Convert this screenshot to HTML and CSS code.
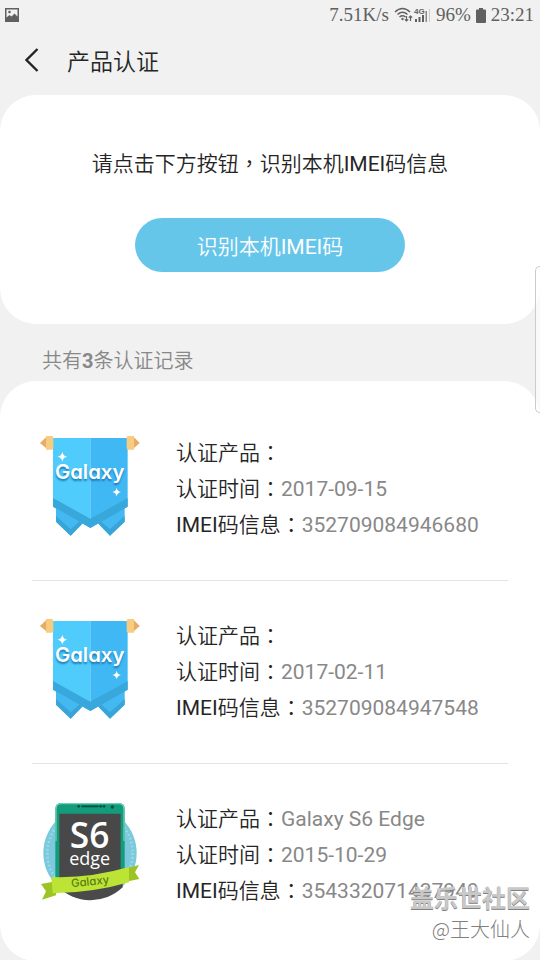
FILE: index.html
```html
<!DOCTYPE html>
<html lang="zh-CN">

<head>
  <meta charset="UTF-8">
  <meta name="viewport" content="width=device-width, initial-scale=1.0">
  <title>产品认证</title>
  <link rel="stylesheet" href="styles.css">
</head>

<body>
  <div class="statusbar">
    <svg class="icon-photo" width="14" height="14" viewBox="0 0 14 14">
      <path d="M0 0h14v14H0z M1.5 1.5v8l3-2.5 2 1.5 3-3 3 3v-7z" fill="#606060" fill-rule="evenodd"/>
      <circle cx="4.500" cy="4" r="1.300" fill="#606060"/>
    </svg>
    <div class="status-right">
      <span>7.51K/s</span>
      <svg width="37" height="16" viewBox="0 0 37 16">
        <g fill="none" stroke="#606060" stroke-width="1.500">
          <path d="M1 5q7.500-7 15 0M3.500 7.500q5-4.500 10 0M5.500 10q3-2.500 6 0"/>
          <path d="M12.500 9v5M10.800 12.300l1.700 1.700 1.700-1.700M16.500 14V9M14.800 10.700l1.700-1.700 1.700 1.700" stroke-width="1.200"/>
        </g>
        <circle cx="8.500" cy="12" r="1.200" fill="#606060"/>
        <text class="net" x="20" y="7">4G</text>
        <path d="M21 12h2v3h-2zM24.500 10h2v5h-2zM28 8h2v7h-2z" fill="#606060"/>
        <path d="M31.500 4H33v11h-1.500z" fill="#888"/>
        <path d="M35 2h1v13h-1z" fill="#ccc"/>
      </svg>
      <span>96%</span>
      <svg width="10" height="15" viewBox="0 0 10 15">
        <path d="M3 0h4v1.500h2q1 0 1 1V14q0 1-1 1H1q-1 0-1-1V2.500q0-1 1-1h2z" fill="#606060"/>
      </svg>
      <span>23:21</span>
    </div>
  </div>

  <header class="header">
    <button class="back" aria-label="返回">
      <svg width="14" height="24" viewBox="0 0 14 24">
        <path d="M12.500 1L1.500 12l11 11" fill="none" stroke="#252525" stroke-width="2.400"/>
      </svg>
    </button>
    <h1>产品认证</h1>
  </header>

  <section class="card identify">
    <p>请点击下方按钮<span lang="zh-TW">，</span>识别本机IMEI码信息</p>
    <button class="btn">识别本机IMEI码</button>
  </section>

  <h2 class="count">共有<b>3</b>条认证记录</h2>

  <ul class="card records">
    <li class="record">
      <svg class="badge" viewBox="30 45 300 312">
        <use href="#flag"/>
      </svg>
      <dl>
        <div><dt>认证产品<span lang="zh-TW">：</span></dt><dd></dd></div>
        <div><dt>认证时间<span lang="zh-TW">：</span></dt><dd>2017-09-15</dd></div>
        <div><dt>IMEI码信息<span lang="zh-TW">：</span></dt><dd>352709084946680</dd></div>
      </dl>
    </li>
    <li class="record">
      <svg class="badge" viewBox="30 45 300 312">
        <use href="#flag"/>
      </svg>
      <dl>
        <div><dt>认证产品<span lang="zh-TW">：</span></dt><dd></dd></div>
        <div><dt>认证时间<span lang="zh-TW">：</span></dt><dd>2017-02-11</dd></div>
        <div><dt>IMEI码信息<span lang="zh-TW">：</span></dt><dd>352709084947548</dd></div>
      </dl>
    </li>
    <li class="record">
      <svg class="badge" viewBox="30 30 300 312">
        <circle cx="180" cy="186" r="140" fill="#7cc8dc"/>
        <circle cx="180" cy="186" r="128" fill="none" stroke="#98d8e8" stroke-width="8" stroke-dasharray="6 6"/>
        <path d="M82 240h196v49A140 140 0 0 1 82 286z" fill="#4a4a4a"/>
        <path d="M76 270V54q0-18 18-18h172q18 0 18 18v216z" fill="#129c7c"/>
        <path d="M78 150V54q0-16 16-16h172q16 0 16 16v96" fill="none" stroke="#6cd0b4" stroke-width="4"/>
        <path d="M88 68h184v200H88z" fill="#484848"/>
        <path d="M156 46h48" stroke="#0a4c40" stroke-width="5" stroke-linecap="round"/>
        <g fill="#0a4c40">
          <circle cx="146" cy="46" r="4"/>
          <circle cx="212" cy="46" r="4"/>
          <circle cx="222" cy="46" r="4"/>
          <circle cx="247" cy="48" r="5"/>
        </g>
        <text class="s6" x="179" y="172">S6</text>
        <text class="edge" x="179" y="222">edge</text>
        <path d="M33 279l45-8v42l-42 13 12-25zM280 235l47-13-12 22 13 20-48 10z" fill="#9cc424"/>
        <path d="M64 258q116 4 233-30v46q-110 32-229 33z" fill="#bce434"/>
        <text class="ribbon" x="180" y="283" transform="rotate(-6 180 270)">Galaxy</text>
      </svg>
      <dl>
        <div><dt>认证产品<span lang="zh-TW">：</span></dt><dd>Galaxy S6 Edge</dd></div>
        <div><dt>认证时间<span lang="zh-TW">：</span></dt><dd>2015-10-29</dd></div>
        <div><dt>IMEI码信息<span lang="zh-TW">：</span></dt><dd>354332071437949</dd></div>
      </dl>
    </li>
  </ul>

  <div class="edge-handle"></div>

  <div class="watermark">
    <strong>盖乐世社区</strong>
    <span>@王大仙人</span>
  </div>

  <!-- shared Galaxy flag badge -->
  <svg class="defs" width="0" height="0">
    <defs>
      <g id="flag">
        <path d="M78 240h80v70l-36 37-44-42zM204 310v-70h80v65l-44 42z" fill="#44b8f0"/>
        <path d="M78 288l44 40 36-32v14l-36 37-44-42zM204 296l36 32 44-40v17l-44 42-36-37z" fill="#38a4d8"/>
        <path d="M69 54h112v270l-112-64z" fill="#50ccfc"/>
        <path d="M181 54h112v206l-112 64z" fill="#40b8f4"/>
        <path d="M69 234l112 62 112-62v26l-112 64-112-64z" fill="#38a8dc"/>
        <path d="M48 48h17q5 0 5 5v31q0 5-5 5H48V78l-18-9 18-10zM312 48h-17q-5 0-5 5v31q0 5 5 5h17V78l17-9-17-10z" fill="#f8cc80"/>
        <path d="M48 52v32l-18-15zM312 52v32l17-15z" fill="#e8ac64"/>
        <path d="M97 95q2 13 15 15-13 2-15 15-2-13-15-15 13-2 15-15zM260 203q2 11 13 13-11 2-13 13-2-11-13-13 11-2 13-13z" fill="#fff"/>
        <text class="galaxy" x="179" y="178">Galaxy</text>
      </g>
    </defs>
  </svg>
</body>

</html>
```
FILE: styles.css
```css
* {
  box-sizing: border-box;
}

body {
  font-family: Roboto, "Noto Sans CJK SC DemiLight", "Noto Sans CJK SC", sans-serif;
  font-size: 21px;
  color: #252525;
  background-color: #f1f1f1;
  margin: 0;
  position: relative;
}

h1, h2, p, ul, dl, dd {
  margin: 0;
  padding: 0;
  font-weight: normal;
}

button {
  font: inherit;
  border: none;
  padding: 0;
  cursor: pointer;
}

[lang="zh-TW"] {
  font-family: "Noto Sans CJK TC DemiLight", "Noto Sans CJK TC", sans-serif;
  line-height: 1;
}

.statusbar {
  display: flex;
  justify-content: space-between;
  align-items: center;
  height: 30px;
  padding: 0 6px 0 5px;
  font-family: "Liberation Serif", serif;
  font-size: 19px;
  color: #606060;
}

.status-right {
  display: flex;
  align-items: center;
  gap: 5px;
}

.net {
  font: bold 8px "Liberation Sans", sans-serif;
  fill: #606060;
}

.header {
  display: flex;
  align-items: center;
  gap: 28px;
  height: 65px;
  padding: 0 25px 6px;
}

.header h1 {
  font-size: 23px;
}

.back {
  display: flex;
  background: none;
}

.card {
  background: white;
  border-radius: 36px;
}

.identify {
  text-align: center;
  padding: 51px 0 52px;
}

.identify p {
  line-height: 36px;
}

.btn {
  width: 50%;
  height: 54px;
  margin-top: 36px;
  border-radius: 27px;
  background-color: #66c6ea;
  color: white;
}

.count {
  padding: 22px 42px 5px;
  font-size: 20px;
  line-height: 30px;
  color: #888;
}

.records {
  list-style: none;
  padding: 17px 32px 15px;
}

.record {
  display: flex;
  gap: 36px;
  padding: 37px 8px;
  border-bottom: 1px solid #e4e4e4;
}

.record:last-child {
  border-bottom: none;
}

.badge {
  width: 100px;
  height: 104px;
  flex: none;
}

.record dl div {
  line-height: 36px;
}

.record dt,
.record dd {
  display: inline;
}

.record dd {
  color: #888;
}

.galaxy {
  font: 600 61px Inter, sans-serif;
  font-feature-settings: "cv11";
  text-anchor: middle;
  fill: white;
  text-shadow: 0 2px 2px #1c78b4;
}

.s6 {
  font: 600 106px "Open Sans", sans-serif;
  text-anchor: middle;
  fill: white;
}

.edge {
  font: 54px "Open Sans", sans-serif;
  text-anchor: middle;
  fill: white;
}

.ribbon {
  font: 500 34px Inter, sans-serif;
  font-feature-settings: "cv11";
  text-anchor: middle;
  fill: #5c7c14;
}

.defs {
  position: absolute;
}

.edge-handle {
  position: absolute;
  top: 266px;
  right: 0;
  width: 5px;
  height: 147px;
  border: 1px solid #ccc;
  border-right: none;
  border-radius: 6px 0 0 6px;
  background: rgba(255, 255, 255, 0.6);
}

.watermark {
  position: absolute;
  right: 10px;
  bottom: 16px;
  display: flex;
  flex-direction: column;
  align-items: flex-end;
  font-family: "Noto Sans CJK SC", sans-serif;
  font-weight: 300;
  font-size: 20px;
  line-height: 32px;
  color: #808080;
}

.watermark strong {
  font-size: 24px;
  font-weight: 700;
  color: #c8c8c8;
  text-shadow: 0 1px 0 #808080;
}
```
